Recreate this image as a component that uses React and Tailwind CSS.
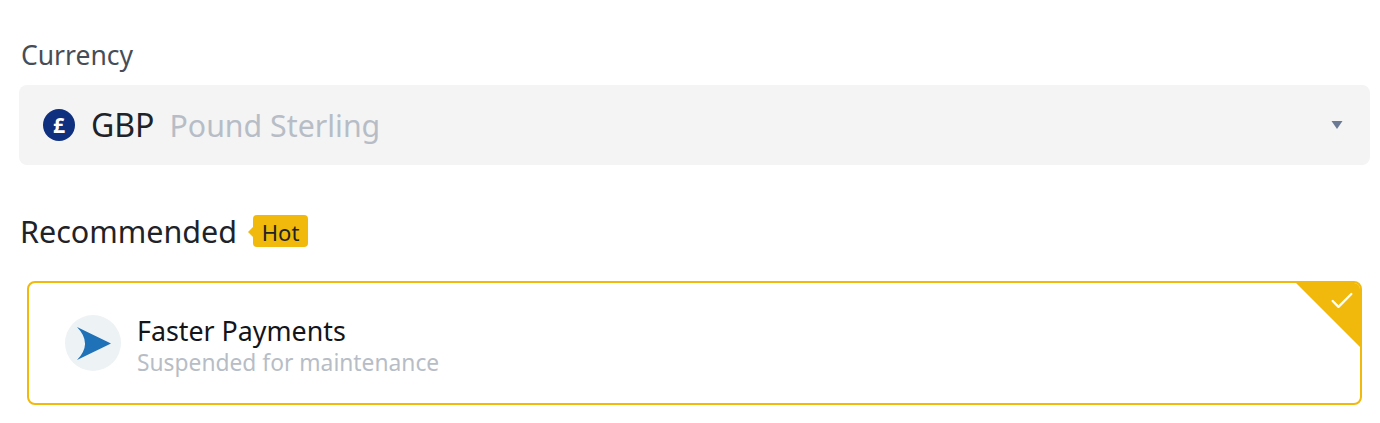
import { Check } from 'lucide-react';

const PoundIcon = () => (
  <div className="w-[32px] h-[32px] rounded-full bg-[#0f2f7f] text-white flex items-center justify-center text-[21px] font-bold leading-none">
    £
  </div>
);

const FasterIcon = () => (
  <svg width="56" height="56" viewBox="0 0 56 56">
    <circle cx="28" cy="28" r="28" fill="#edf2f5" />
    <path d="M12 12 L46 28.500 L12 45 Q28 28.500 12 12 Z" fill="#1f71b8" />
  </svg>
);

export default function App() {
  return (
    <div className="w-[1380px] h-[423px] bg-white pl-[19px] pr-[10px] pt-[38px] font-['Noto_Sans',sans-serif]">
      <div className="h-[47px] pl-[2px] text-[26.500px] leading-[34px] text-[#474d57]">Currency</div>

      <div className="h-[80px] rounded-[8px] bg-[#f4f4f4] flex items-center pl-[24px] pr-[27px]">
        <PoundIcon />
        <span className="ml-[16px] text-[32px] text-[#1e2329]">GBP</span>
        <span className="ml-[15px] pt-[2px] text-[30.300px] text-[#b7bdc6]">Pound Sterling</span>
        <svg className="ml-auto" width="12" height="10" viewBox="0 0 12 10">
          <path d="M0.500 1 H11.500 L6 9 Z" fill="#6b7a94" />
        </svg>
      </div>

      <div className="mt-[50px] h-[34px] flex items-center">
        <span className="pl-[1px] text-[30.500px] text-[#1e2329]">Recommended</span>
        <div className="relative ml-[16px] w-[55px] h-[32px] pt-[2px] -translate-y-px rounded-[4px] bg-[#f0b90b] text-[22px] text-[#1e2329] flex items-center justify-center">
          <span className="absolute left-[-5px] top-[12px] w-0 h-0 border-y-[5px] border-y-transparent border-r-[5px] border-r-[#f0b90b]" />
          Hot
        </div>
      </div>

      <div className="relative mt-[32px] mx-[8px] h-[124px] rounded-[8px] border-2 border-[#f0b90b] bg-white flex items-center pl-[36px] overflow-hidden">
        <FasterIcon />
        <div className="ml-[16px] pt-[3px] flex flex-col">
          <span className="text-[26.800px] leading-[34px] text-[#14151a] pt-[1px]">Faster Payments</span>
          <span className="pt-[1px] text-[22.800px] leading-[28px] text-[#b7bdc6]">Suspended for maintenance</span>
        </div>
        <div className="absolute right-0 top-0 w-0 h-0 border-t-[64px] border-t-[#f0b90b] border-l-[64px] border-l-transparent" />
        <Check className="absolute right-[4px] top-[4px] text-white" size={28} strokeWidth={2} />
      </div>
    </div>
  );
}
